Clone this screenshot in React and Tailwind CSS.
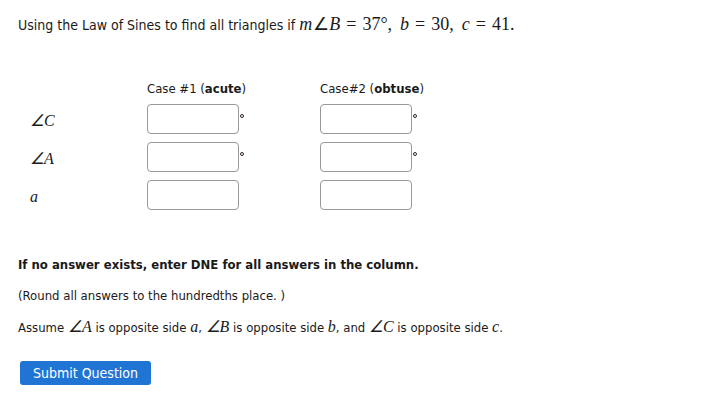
import React from "react";

function M({ children, big, className = "" }) {
  return (
    <span className={`font-['Liberation_Serif',serif] italic ${big ? "text-[18px]" : "text-[16px]"} ${className}`}>
      {children}
    </span>
  );
}

function N({ children, big, className = "" }) {
  return (
    <span className={`font-['Liberation_Serif',serif] ${big ? "text-[18px]" : "text-[16px]"} ${className}`}>
      {children}
    </span>
  );
}

function Box({ deg }) {
  return (
    <div className="flex items-start">
      <input
        type="text"
        className="w-[92px] h-[30px] rounded-[4px] border border-[#999] bg-white outline-none"
      />
      {deg && <span className="ml-[1px] mt-[10px] w-[4px] h-[4px] rounded-full border border-[#33202f]" />}
    </div>
  );
}

export default function App() {
  return (
    <div className="bg-white text-[13px] text-[#1a1a1a] font-['DejaVu_Sans_Condensed','DejaVu_Sans',sans-serif] w-[701px] h-[404px] px-[18px] pt-[13px]">
      <p className="leading-[22px] text-[14px]">
        Using the Law of Sines to find all triangles if{" "}
        <M big>m</M>
        <N big className="ml-[1px]">∠</N>
        <M big>B</M>
        <N big className="mx-[6px]">=</N>
        <N big>37°,</N>
        <M big className="ml-[8px]">b</M>
        <N big className="mx-[6px]">=</N>
        <N big>30,</N>
        <M big className="ml-[8px]">c</M>
        <N big className="mx-[6px]">=</N>
        <N big>41.</N>
      </p>

      <div className="mt-[42px] ml-[10px] grid grid-cols-[119px_173px_120px] items-center">
        <div />
        <div className="h-[22px] leading-[22px]">
          Case #1 (<b>acute</b>)
        </div>
        <div className="h-[22px] leading-[22px]">
          Case#2 (<b>obtuse</b>)
        </div>

        <div className="pl-[2px] pt-[4px]"><M>∠C</M></div>
        <div className="py-[4px]"><Box deg /></div>
        <div className="py-[4px]"><Box deg /></div>

        <div className="pl-[2px] pt-[4px]"><M>∠A</M></div>
        <div className="py-[4px]"><Box deg /></div>
        <div className="py-[4px]"><Box deg /></div>

        <div className="pl-[2px] pt-[4px]"><M>a</M></div>
        <div className="py-[4px]"><Box /></div>
        <div className="py-[4px]"><Box /></div>
      </div>

      <p className="mt-[40px] font-bold leading-[22px]">
        If no answer exists, enter DNE for all answers in the column.
      </p>
      <p className="mt-[9px] leading-[22px]">(Round all answers to the hundredths place. )</p>
      <p className="mt-[9px] leading-[22px]">
        Assume <M>∠A</M> is opposite side <M>a</M>, <M>∠B</M> is opposite side <M>b</M>, and{" "}
        <M>∠C</M> is opposite side <M>c</M>.
      </p>

      <button className="mt-[22px] ml-[2px] w-[131px] h-[24px] rounded-[3px] bg-[#1f74d4] text-white text-[14px] leading-[24px]">
        Submit Question
      </button>
    </div>
  );
}
